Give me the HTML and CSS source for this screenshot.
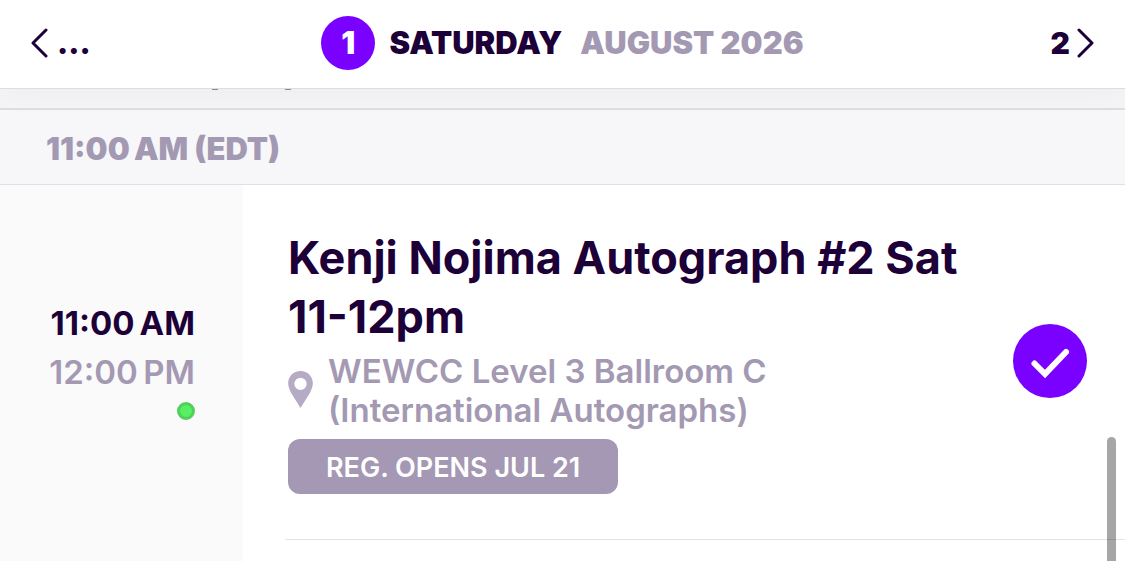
FILE: index.html
```html
<!DOCTYPE html>
<html lang="en">
<head>
<meta charset="utf-8">
<meta name="viewport" content="width=device-width, initial-scale=1">
<title>Schedule</title>
<link rel="stylesheet" href="styles.css">
</head>
<body>
<div class="app">
  <header class="daybar">
    <button class="nav nav-prev" type="button" aria-label="Previous day">
      <svg class="chevron" viewBox="0 0 18 30" aria-hidden="true"><path d="M16 2 L3 15 L16 28"/></svg>
      <span>...</span>
    </button>
    <h1 class="day">
      <span class="day-number">1</span>
      <span class="weekday">SATURDAY</span>
      <span class="month">AUGUST 2026</span>
    </h1>
    <button class="nav nav-next" type="button" aria-label="Next day">
      <span>2</span>
      <svg class="chevron" viewBox="0 0 18 30" aria-hidden="true"><path d="M2 2 L15 15 L2 28"/></svg>
    </button>
  </header>
  <main class="schedule">
    <div class="previous" aria-hidden="true"><i class="tail"></i><i class="tail"></i></div>
    <h2 class="slot">11:00&#8239;AM (EDT)</h2>
    <article class="event">
      <div class="times">
        <time class="start">11:00&#8239;AM</time>
        <time class="end">12:00&#8239;PM</time>
        <span class="status"></span>
      </div>
      <div class="body">
        <div class="details">
          <h3 class="title">Kenji Nojima Autograph #2 Sat 11-12pm</h3>
          <p class="place">
            <svg class="pin" viewBox="0 0 24 36" aria-hidden="true"><path fill-rule="evenodd" d="M12 0C5.200 0 0 5.300 0 12c0 3 1.200 6 2.600 8.800L12 36l9.400-15.200C22.800 18 24 15 24 12 24 5.300 18.800 0 12 0Zm0 6.500a6 6 0 1 1 0 12 6 6 0 0 1 0-12Z"/></svg>
            <span>WEWCC Level 3 Ballroom C<br>(International Autographs)</span>
          </p>
          <span class="badge">REG. OPENS JUL 21</span>
        </div>
        <button class="check" type="button" aria-pressed="true" aria-label="Added to my schedule">
          <svg viewBox="0 0 74 74" aria-hidden="true"><path d="M21.500 39.500 L32 50 L53 28"/></svg>
        </button>
      </div>
    </article>
    <div class="next"></div>
  </main>
  <div class="scroll-thumb"></div>
</div>
</body>
</html>
```
FILE: styles.css
```css
* { box-sizing: border-box; }
body {
  margin: 0;
  background: #fff;
  color: #1d0038;
  font-family: Inter, "Liberation Sans", sans-serif;
}
h1, h2, h3, p { margin: 0; }
button {
  border: 0;
  padding: 0;
  background: none;
  color: inherit;
  font: inherit;
  cursor: pointer;
}
.app {
  position: relative;
  height: 100vh;
  display: flex;
  flex-direction: column;
  overflow: hidden;
}

.daybar {
  position: relative;
  z-index: 1;
  display: grid;
  grid-template-columns: 1fr auto 1fr;
  align-items: center;
  padding: 16px 30px 18px;
  background: #fff;
  border-bottom: 1px solid #dddde0;
  box-shadow: 0 4px 32px rgba(0, 0, 0, 0.04);
}
.nav {
  display: flex;
  align-items: center;
  font-size: 30px;
  font-weight: 900;
  line-height: 36px;
}
.nav-prev { justify-self: start; gap: 9px; }
.nav-next { justify-self: end; gap: 7px; }
.chevron {
  width: 18px;
  height: 30px;
  fill: none;
  stroke: #1d0038;
  stroke-width: 3;
  stroke-linecap: round;
  stroke-linejoin: round;
}
.day {
  display: flex;
  align-items: center;
  font-size: 31px;
  font-weight: 900;
  line-height: 54px;
}
.day-number {
  width: 54px;
  height: 54px;
  border-radius: 50%;
  background: #7a00ff;
  color: #fff;
  text-align: center;
}
.weekday { margin-left: 14px; }
.month { margin-left: 18px; color: #a499b2; }

.schedule {
  flex: 1;
  display: flex;
  flex-direction: column;
}
.previous {
  display: flex;
  gap: 67px;
  height: 21px;
  padding-left: 212px;
  background: #f5f5f7;
  border-bottom: 2px solid #dedee1;
}
.tail {
  width: 6px;
  height: 1px;
  background: #928b9b;
}
.slot {
  padding: 21px 46px 17px;
  background: #f7f7fa;
  border-bottom: 1px solid #e0e0e3;
  color: #a499b2;
  font-size: 31px;
  font-weight: 900;
  line-height: 36px;
}
.event { display: flex; }
.times {
  display: flex;
  flex-direction: column;
  justify-content: center;
  align-items: flex-end;
  width: 243px;
  padding: 0 48px 6px 0;
  background: #fafafb;
  font-size: 33px;
  font-weight: 600;
  line-height: 49px;
}
.start { font-weight: 700; }
.end { color: #a499b2; }
.status {
  width: 18px;
  height: 18px;
  margin-top: 5px;
  border: 3px solid #50cf5a;
  border-radius: 50%;
  background: #58ef63;
}
.body {
  flex: 1;
  display: flex;
  align-items: center;
  justify-content: space-between;
  gap: 40px;
  margin-left: 42px;
  padding: 43px 38px 45px 3px;
  border-bottom: 1px solid #e3e3e6;
}
.title {
  font-size: 45px;
  font-weight: 700;
  line-height: 59px;
}
.place {
  display: flex;
  align-items: center;
  gap: 15px;
  margin: 6px 0 9px;
  color: #a499b2;
  font-size: 33px;
  font-weight: 600;
  line-height: 39px;
}
.pin {
  flex: none;
  width: 25px;
  height: 37px;
  margin-bottom: 4px;
  fill: #b5abc4;
}
.badge {
  display: block;
  width: fit-content;
  padding: 13px 38px 10px;
  border-radius: 12px;
  background: #a598b4;
  color: #fff;
  font-size: 27px;
  font-weight: 600;
  line-height: 32px;
}
.check {
  flex: none;
  width: 74px;
  height: 74px;
  border-radius: 50%;
  background: #7a00ff;
}
.check svg {
  display: block;
  fill: none;
  stroke: #fff;
  stroke-width: 6;
  stroke-linecap: round;
}
.next {
  flex: 1;
  width: 243px;
  background: #fafafb;
}
.scroll-thumb {
  position: absolute;
  right: 9px;
  top: 437px;
  bottom: -20px;
  width: 9px;
  border-radius: 5px;
  background: rgba(0, 0, 0, 0.35);
}
```
